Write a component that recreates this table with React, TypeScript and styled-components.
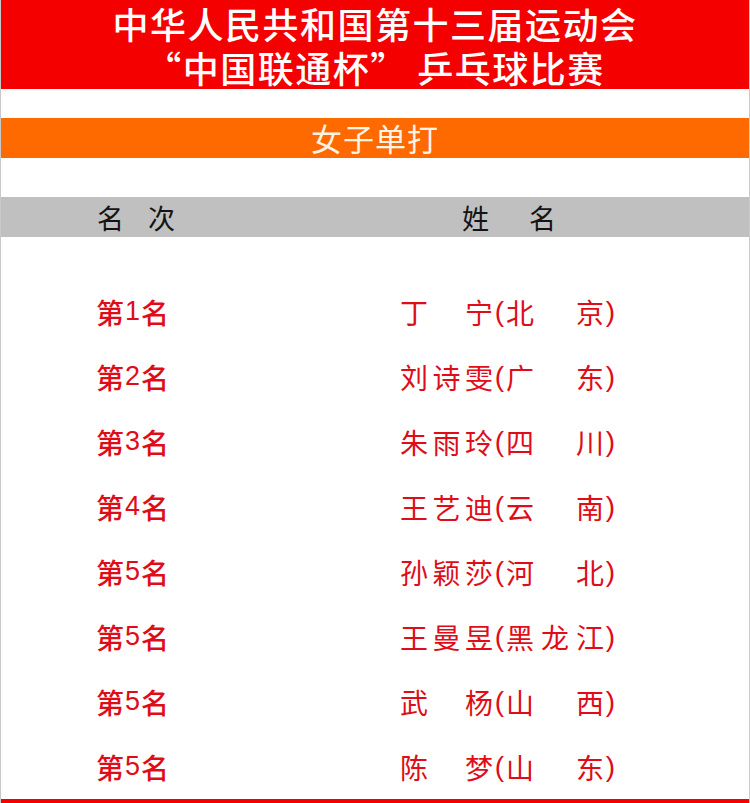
import React from 'react';
import styled, { createGlobalStyle } from 'styled-components';

interface Result {
  rank: number;
  name: string[];
  region: string[];
}

const results: Result[] = [
  { rank: 1, name: ['丁', '宁'], region: ['北', '京'] },
  { rank: 2, name: ['刘', '诗', '雯'], region: ['广', '东'] },
  { rank: 3, name: ['朱', '雨', '玲'], region: ['四', '川'] },
  { rank: 4, name: ['王', '艺', '迪'], region: ['云', '南'] },
  { rank: 5, name: ['孙', '颖', '莎'], region: ['河', '北'] },
  { rank: 5, name: ['王', '曼', '昱'], region: ['黑', '龙', '江'] },
  { rank: 5, name: ['武', '杨'], region: ['山', '西'] },
  { rank: 5, name: ['陈', '梦'], region: ['山', '东'] },
];

const App = () => {
  return (
    <>
      <GlobalStyle />
      <Sheet lang="zh-CN">
        <TitleBand>
          <TitleLine>中华人民共和国第十三届运动会</TitleLine>
          <TitleLine>“中国联通杯” 乒乓球比赛</TitleLine>
        </TitleBand>
        <Gap />
        <EventBand>女子单打</EventBand>
        <Gap />
        <HeadBand>
          <HeadCell $left={97} $width={78}>
            <span>名</span>
            <span>次</span>
          </HeadCell>
          <HeadCell $left={462} $width={94}>
            <span>姓</span>
            <span>名</span>
          </HeadCell>
        </HeadBand>
        <Spacer />
        <List>
          {results.map((r, i) => (
            <Row key={i}>
              <Rank>
                第<Digit>{r.rank}</Digit>名
              </Rank>
              <Person>
                <Spread $width={93}>
                  {r.name.map((c, j) => (
                    <span key={j}>{c}</span>
                  ))}
                </Spread>
                <Paren>(</Paren>
                <Spread $width={98}>
                  {r.region.map((c, j) => (
                    <span key={j}>{c}</span>
                  ))}
                </Spread>
                <Paren>)</Paren>
              </Person>
            </Row>
          ))}
        </List>
        <BottomBar />
      </Sheet>
    </>
  );
};

export default App;

const GlobalStyle = createGlobalStyle`
  html, body {
    margin: 0;
    padding: 0;
    background: #ffffff;
  }
  body {
    font-family: "Noto Sans CJK SC", "Noto Sans", sans-serif;
  }
`;

const Sheet = styled.div`
  width: 750px;
  height: 803px;
  box-sizing: border-box;
  border-left: 1px solid #c9c9c9;
  border-right: 1px solid #c9c9c9;
  display: flex;
  flex-direction: column;
  overflow: hidden;
`;

const TitleBand = styled.div`
  height: 89px;
  flex: none;
  background: #f50000;
  color: #ffffff;
  display: flex;
  flex-direction: column;
  align-items: center;
  padding-top: 1px;
  box-sizing: border-box;
`;

const TitleLine = styled.div`
  font-size: 36px;
  font-weight: 500;
  line-height: 44px;
  letter-spacing: 1.5px;
  white-space: pre;
`;

const Gap = styled.div`
  height: 29px;
  flex: none;
`;

const EventBand = styled.div`
  height: 40px;
  flex: none;
  background: #ff6a00;
  color: #fff4e4;
  font-size: 31px;
  line-height: 40px;
  text-align: center;
  letter-spacing: 1px;
`;

const HeadBand = styled.div`
  height: 40px;
  flex: none;
  margin-top: 10px;
  background: #c0c0c0;
  position: relative;
  color: #141414;
  font-size: 27px;
  font-weight: 400;
`;

const HeadCell = styled.div<{ $left: number; $width: number }>`
  position: absolute;
  top: 0;
  left: ${(p) => p.$left - 1}px;
  width: ${(p) => p.$width}px;
  height: 40px;
  display: flex;
  justify-content: space-between;
  align-items: center;
`;

const Spacer = styled.div`
  height: 42px;
  flex: none;
`;

const List = styled.div`
  display: flex;
  flex-direction: column;
`;

const Row = styled.div`
  height: 65px;
  display: grid;
  grid-template-columns: 399px 1fr;
  align-items: center;
  color: #de0d18;
  font-size: 28px;
`;

const Rank = styled.div`
  padding-left: 95px;
  display: flex;
  align-items: center;
  font-weight: 500;
`;

const Digit = styled.span`
  font-family: "Liberation Sans", Arial, sans-serif;
  font-size: 27px;
  margin: 0 1px;
`;

const Person = styled.div`
  display: flex;
  align-items: center;
`;

const Spread = styled.div<{ $width: number }>`
  width: ${(p) => p.$width}px;
  display: flex;
  justify-content: space-between;
`;

const Paren = styled.span`
  font-family: "Liberation Sans", Arial, sans-serif;
  font-weight: 300;
  width: 13px;
  text-align: center;
`;

const BottomBar = styled.div`
  height: 8px;
  flex: none;
  background: #f50000;
`;
